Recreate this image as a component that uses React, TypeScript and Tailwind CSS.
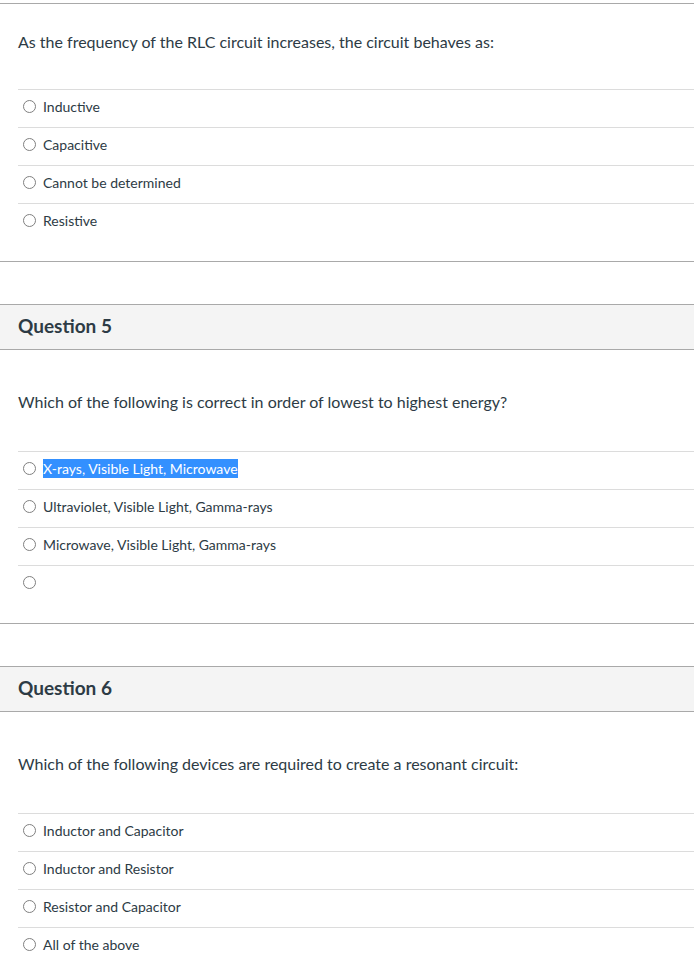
import React from 'react';

type Question = {
  title?: string;
  text: string;
  options: string[];
  highlighted?: number;
  last?: boolean;
};

const QUESTIONS: Question[] = [
  {
    text: 'As the frequency of the RLC circuit increases, the circuit behaves as:',
    options: ['Inductive', 'Capacitive', 'Cannot be determined', 'Resistive'],
  },
  {
    title: 'Question 5',
    text: 'Which of the following is correct in order of lowest to highest energy?',
    options: [
      'X-rays, Visible Light, Microwave',
      'Ultraviolet, Visible Light, Gamma-rays',
      'Microwave, Visible Light, Gamma-rays',
      '',
    ],
    highlighted: 0,
  },
  {
    title: 'Question 6',
    text: 'Which of the following devices are required to create a resonant circuit:',
    options: ['Inductor and Capacitor', 'Inductor and Resistor', 'Resistor and Capacitor', 'All of the above'],
    last: true,
  },
];

function Option({ label, highlighted }: { label: string; highlighted?: boolean }) {
  return (
    <div className="ml-[18px] border-t border-[#dcdcdc] h-[38px] flex items-center pl-[5px] pb-[5px]">
      <span className="w-[13px] h-[13px] rounded-full border border-[#808080] bg-white shrink-0 mt-[1px]" />
      <span
        className={`ml-[7px] text-[14px] leading-[19px] ${
          highlighted ? 'bg-[#3390ff] text-white' : 'text-[#2d3b45]'
        }`}
      >
        {label}
      </span>
    </div>
  );
}

function QuestionBlock({ q }: { q: Question }) {
  return (
    <div className={q.title ? 'mt-[42px]' : ''}>
      {q.title && (
        <div className="h-[46px] border-y border-[#a9a9a9] bg-[#f4f4f4] flex items-center px-[18px] pb-[3px]">
          <h2 className="text-[19px] font-bold text-[#2d3b45] leading-none">{q.title}</h2>
        </div>
      )}
      <div className={q.last ? '' : 'border-b border-[#a9a9a9] pb-[20px]'}>
        <p
          className={`px-[18px] text-[16px] leading-[24px] text-[#2d3b45] ${
            q.title ? 'pt-[40px] mb-[37px]' : 'pt-[26px] mb-[35px]'
          }`}
        >
          {q.text}
        </p>
        {q.options.map((o, i) => (
          <Option key={i} label={o} highlighted={q.highlighted === i} />
        ))}
      </div>
    </div>
  );
}

export default function App() {
  return (
    <div className="min-h-screen bg-white pt-[3px] font-['Lato','Liberation_Sans',sans-serif]">
      <div className="border-t border-[#a9a9a9]">
        {QUESTIONS.map((q, i) => (
          <QuestionBlock key={i} q={q} />
        ))}
      </div>
    </div>
  );
}
